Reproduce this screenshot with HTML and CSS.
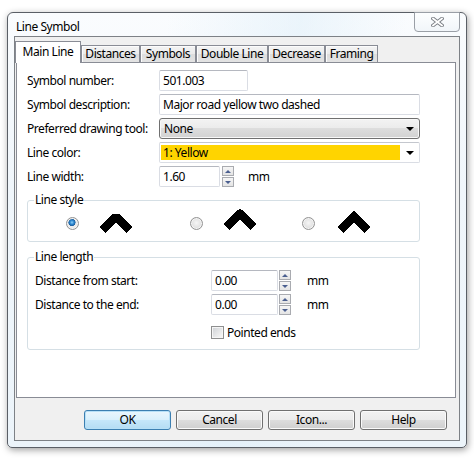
FILE: index.html
```html
<!DOCTYPE html>
<html lang="en">
<head>
<meta charset="utf-8">
<title>Line Symbol</title>
<link rel="stylesheet" href="styles.css">
</head>
<body>
<div class="window">
  <div class="titlebar">
    <span class="title">Line Symbol</span>
    <div class="close-btn">
      <svg width="13" height="10" viewBox="0 0 13 10">
        <path d="M2 1.5 L11 8.5 M11 1.5 L2 8.5" stroke="#7b7f85" stroke-width="3.6" stroke-linecap="square" fill="none"/>
        <path d="M2 1.5 L11 8.5 M11 1.5 L2 8.5" stroke="#ffffff" stroke-width="1.7" stroke-linecap="square" fill="none"/>
      </svg>
    </div>
  </div>

  <div class="client">
    <div class="tabs">
      <div class="tab tab-active tab-main">Main Line</div>
      <div class="tab tab-distances">Distances</div>
      <div class="tab tab-symbols">Symbols</div>
      <div class="tab tab-double">Double Line</div>
      <div class="tab tab-decrease">Decrease</div>
      <div class="tab tab-framing">Framing</div>
    </div>

    <div class="panel">
      <div class="form">
        <span class="label">Symbol number:</span>
        <div class="textbox w-number">501.003</div>

        <span class="label">Symbol description:</span>
        <div class="textbox w-wide">Major road yellow two dashed</div>

        <span class="label">Preferred drawing tool:</span>
        <div class="combo w-wide"><span>None</span><span class="arrow"></span></div>

        <span class="label">Line color:</span>
        <div class="color-combo w-wide"><span class="swatch">1: Yellow</span><span class="arrow-box"><span class="arrow"></span></span></div>

        <span class="label">Line width:</span>
        <div class="inline">
          <div class="textbox w-width">1.60</div>
          <div class="spin spin-gap2"><span class="spin-up"></span><span class="spin-down"></span></div>
          <span class="unit unit-14">mm</span>
        </div>
      </div>

      <fieldset class="group group-style">
        <legend>Line style</legend>
        <div class="styles">
          <div class="style-opt">
            <input type="radio" name="join" class="radio" checked>
            <svg class="chev" width="36" height="25" viewBox="0 0 36 25" shape-rendering="crispEdges"><polyline points="4.5,21 18,7.5 31.5,21" fill="none" stroke="#000" stroke-width="8" stroke-linejoin="bevel"/></svg>
          </div>
          <div class="style-opt">
            <input type="radio" name="join" class="radio">
            <svg class="chev chev-high" width="36" height="25" viewBox="0 0 36 25" shape-rendering="crispEdges"><polyline points="4.5,21 18,7.5 31.5,21" fill="none" stroke="#000" stroke-width="8" stroke-linejoin="round"/></svg>
          </div>
          <div class="style-opt style-opt-wide">
            <input type="radio" name="join" class="radio">
            <svg class="chev" width="36" height="25" viewBox="0 0 36 25" shape-rendering="crispEdges"><polyline points="4.5,21 18,7.5 31.5,21" fill="none" stroke="#000" stroke-width="8" stroke-linejoin="miter"/></svg>
          </div>
        </div>
      </fieldset>

      <fieldset class="group group-length">
        <legend>Line length</legend>
        <div class="len-grid">
          <span class="label">Distance from start:</span>
          <div class="inline">
            <div class="textbox w-dist">0.00</div>
            <div class="spin spin-gap1"><span class="spin-up"></span><span class="spin-down"></span></div>
            <span class="unit unit-16">mm</span>
          </div>

          <span class="label">Distance to the end:</span>
          <div class="inline">
            <div class="textbox w-dist">0.00</div>
            <div class="spin spin-gap1"><span class="spin-up"></span><span class="spin-down"></span></div>
            <span class="unit unit-16">mm</span>
          </div>

          <span></span>
          <label class="check-row"><input type="checkbox" class="check"><span>Pointed ends</span></label>
        </div>
      </fieldset>
    </div>

    <div class="buttons">
      <button class="btn btn-default">OK</button>
      <button class="btn">Cancel</button>
      <button class="btn">Icon...</button>
      <button class="btn">Help</button>
    </div>
  </div>
</div>
</body>
</html>
```

FILE: styles.css
```css
* {
  box-sizing: border-box;
}

html,
body {
  margin: 0;
  padding: 0;
}

body {
  width: 474px;
  height: 459px;
  overflow: hidden;
  background: #ffffff;
  font-family: "Noto Sans", "Segoe UI", sans-serif;
  font-size: 12px;
  letter-spacing: -0.45px;
  color: #000000;
}

/* ---------- window frame ---------- */

.window {
  margin: 12px 0 0 7px;
  width: 460px;
  height: 436px;
  border: 1px solid #5a5f66;
  border-radius: 6px 6px 5px 5px;
  padding: 0 6px 6px 6px;
  background:
    linear-gradient(100deg, rgba(255,255,255,0) 30%, rgba(220,237,248,0.5) 55%, rgba(255,255,255,0) 75%),
    linear-gradient(180deg, #fafcfe 0%, #f0f6fb 40%, #ecf4fa 100%);
  box-shadow: 1px 2px 7px rgba(0, 0, 0, 0.38);
  display: flex;
  flex-direction: column;
}

.titlebar {
  height: 23px;
  display: flex;
  align-items: flex-start;
  justify-content: space-between;
}

.title {
  margin: 6px 0 0 2px;
  line-height: 16px;
}

.close-btn {
  width: 46px;
  height: 20px;
  margin-top: -1px;
  border: 1px solid #9a9fa6;
  border-radius: 0 0 4px 4px;
  background: linear-gradient(180deg, #fdfeff 0%, #f1f5f9 100%);
  display: flex;
  align-items: center;
  justify-content: center;
}

.client {
  flex: 1;
  display: flex;
  flex-direction: column;
  border: 1px solid #7d8186;
  background: #f0f0f0;
  padding-top: 4px;
}

/* ---------- tabs ---------- */

.tabs {
  height: 21px;
  display: flex;
  align-items: flex-end;
}

.tab {
  height: 17px;
  border: 1px solid #898c95;
  border-bottom: none;
  background: linear-gradient(180deg, #f4f4f4 0%, #ebebeb 50%, #dddddd 51%, #e3e3e3 100%);
  box-shadow: inset 1px 1px 0 #fcfcfc;
  text-align: center;
  line-height: 16px;
}

.tab-active {
  position: relative;
  z-index: 1;
  height: 22px;
  margin-bottom: -1px;
  background: #ffffff;
  box-shadow: none;
  line-height: 20px;
}

.tab-main { width: 66px; }
.tab-distances { width: 59px; }
.tab-symbols { width: 56px; }
.tab-double { width: 72px; }
.tab-decrease { width: 57px; }
.tab-framing { width: 53px; }

.panel {
  flex: 1;
  margin: 0 3px 0 1px;
  border: 1px solid #898c95;
  background: #ffffff;
  padding: 7px 0 0 10px;
}

/* ---------- main form ---------- */

.form {
  display: grid;
  grid-template-columns: 132px auto;
  grid-auto-rows: 21px;
  row-gap: 3px;
  align-items: center;
  justify-items: start;
}

.label {
  line-height: 16px;
  white-space: nowrap;
}

.textbox {
  height: 21px;
  border: 1px solid #dadde4;
  border-top-color: #b5b8c0;
  border-radius: 2px;
  background: #ffffff;
  padding: 0 3px;
  line-height: 19px;
  white-space: nowrap;
}

.w-number { width: 89px; }
.w-wide { width: 261px; }
.w-width { width: 61px; }
.w-dist { width: 67px; }

.combo {
  height: 21px;
  border: 1px solid #707070;
  border-radius: 3px;
  background: linear-gradient(180deg, #f3f3f3 0%, #ebebeb 50%, #dddddd 50%, #d2d2d2 100%);
  box-shadow: inset 0 0 0 1px #f8f8f8;
  padding: 0 5px 0 4px;
  display: flex;
  align-items: center;
  justify-content: space-between;
}

.arrow {
  width: 0;
  height: 0;
  border-left: 4px solid transparent;
  border-right: 4px solid transparent;
  border-top: 4px solid #000000;
}

.color-combo {
  height: 21px;
  border: 1px solid #dadde4;
  border-top-color: #c4c7ce;
  border-radius: 2px;
  background: #ffffff;
  padding: 2px 0 2px 1px;
  display: flex;
}

.swatch {
  flex: 1;
  background: #ffd400;
  padding-left: 2px;
  line-height: 15px;
}

.arrow-box {
  width: 19px;
  display: flex;
  align-items: center;
  justify-content: center;
}

.inline {
  display: flex;
  align-items: center;
}

.spin {
  display: flex;
  flex-direction: column;
  gap: 1px;
}

.spin-gap2 { margin-left: 2px; }
.spin-gap1 { margin-left: 1px; }

.spin-up,
.spin-down {
  width: 12px;
  height: 10px;
  border: 1px solid #a9abb0;
  background: linear-gradient(180deg, #f6f6f6 0%, #e4e4e4 100%);
  display: flex;
  align-items: center;
  justify-content: center;
}

.spin-up::after,
.spin-down::after {
  content: "";
  width: 0;
  height: 0;
  border-left: 3px solid transparent;
  border-right: 3px solid transparent;
}

.spin-up::after {
  border-bottom: 3px solid #4b5f8f;
}

.spin-down::after {
  border-top: 3px solid #4b5f8f;
}

.unit {
  line-height: 16px;
}

.unit-14 { margin-left: 14px; }
.unit-16 { margin-left: 16px; }

/* ---------- group boxes ---------- */

.group {
  margin: 5px 0 0 0;
  width: 393px;
  min-width: 0;
  border: 1px solid #d5dfe5;
  border-radius: 3px;
  padding: 3px 0 6px 7px;
}

.group legend {
  margin-left: -1px;
  padding: 0 1px;
  line-height: 16px;
}

.group-length {
  margin-top: 7px;
  padding-top: 5px;
  padding-bottom: 3px;
}

.styles {
  display: grid;
  grid-template-columns: 124px 112px auto;
  padding-left: 31px;
  height: 24px;
}

.style-opt {
  display: flex;
  align-items: center;
  gap: 19px;
}

.style-opt-wide {
  gap: 21px;
}

.chev {
  display: block;
  margin: -2px 0 2px 0;
}

.chev-high {
  margin: -5px 0 5px 0;
}

.radio {
  appearance: none;
  -webkit-appearance: none;
  margin: 0;
  width: 13px;
  height: 13px;
  border-radius: 50%;
  border: 1px solid #939393;
  background: radial-gradient(circle at 50% 45%, #f6f6f6 0%, #dcdcdc 75%, #cfcfcf 100%);
  box-shadow: inset 0 0 0 1px #f4f4f4;
}

.radio:checked {
  background:
    radial-gradient(circle at 45% 40%, #8fd0f7 0, #2b86cf 2px, #1d5f9e 3.4px, rgba(0,0,0,0) 3.8px),
    radial-gradient(circle, #f2f2f2 0, #e2e2e2 100%);
}

.len-grid {
  display: grid;
  grid-template-columns: 176px auto;
  grid-template-rows: 21px 21px 28px;
  row-gap: 3px;
  align-items: center;
  justify-items: start;
}

.check-row {
  display: flex;
  align-items: center;
  gap: 3px;
}

.check {
  appearance: none;
  -webkit-appearance: none;
  margin: 0;
  width: 13px;
  height: 13px;
  border: 1px solid #8e8f8f;
  background: linear-gradient(135deg, #cdd0d4 0%, #f2f2f2 80%);
  box-shadow: inset 0 0 0 1px #f5f5f5;
}

/* ---------- dialog buttons ---------- */

.buttons {
  display: flex;
  justify-content: flex-end;
  gap: 5px;
  margin: 12px 12px 10px 0;
}

.btn {
  width: 87px;
  height: 20px;
  margin: 0;
  padding: 0;
  border: 1px solid #707070;
  border-radius: 3px;
  background: linear-gradient(180deg, #f2f2f2 0%, #ebebeb 50%, #dddddd 50%, #cfcfcf 100%);
  box-shadow: inset 0 0 0 1px #fafafa;
  font-family: inherit;
  font-size: 12px;
  letter-spacing: -0.45px;
  color: #000000;
  line-height: 18px;
}

.btn-default {
  border-color: #3c7fb1;
  background: linear-gradient(180deg, #eaf6fd 0%, #d9f0fc 50%, #c6e7fa 50%, #b4dcf3 100%);
  box-shadow: inset 0 0 0 1px #b7e0f7;
}
```
